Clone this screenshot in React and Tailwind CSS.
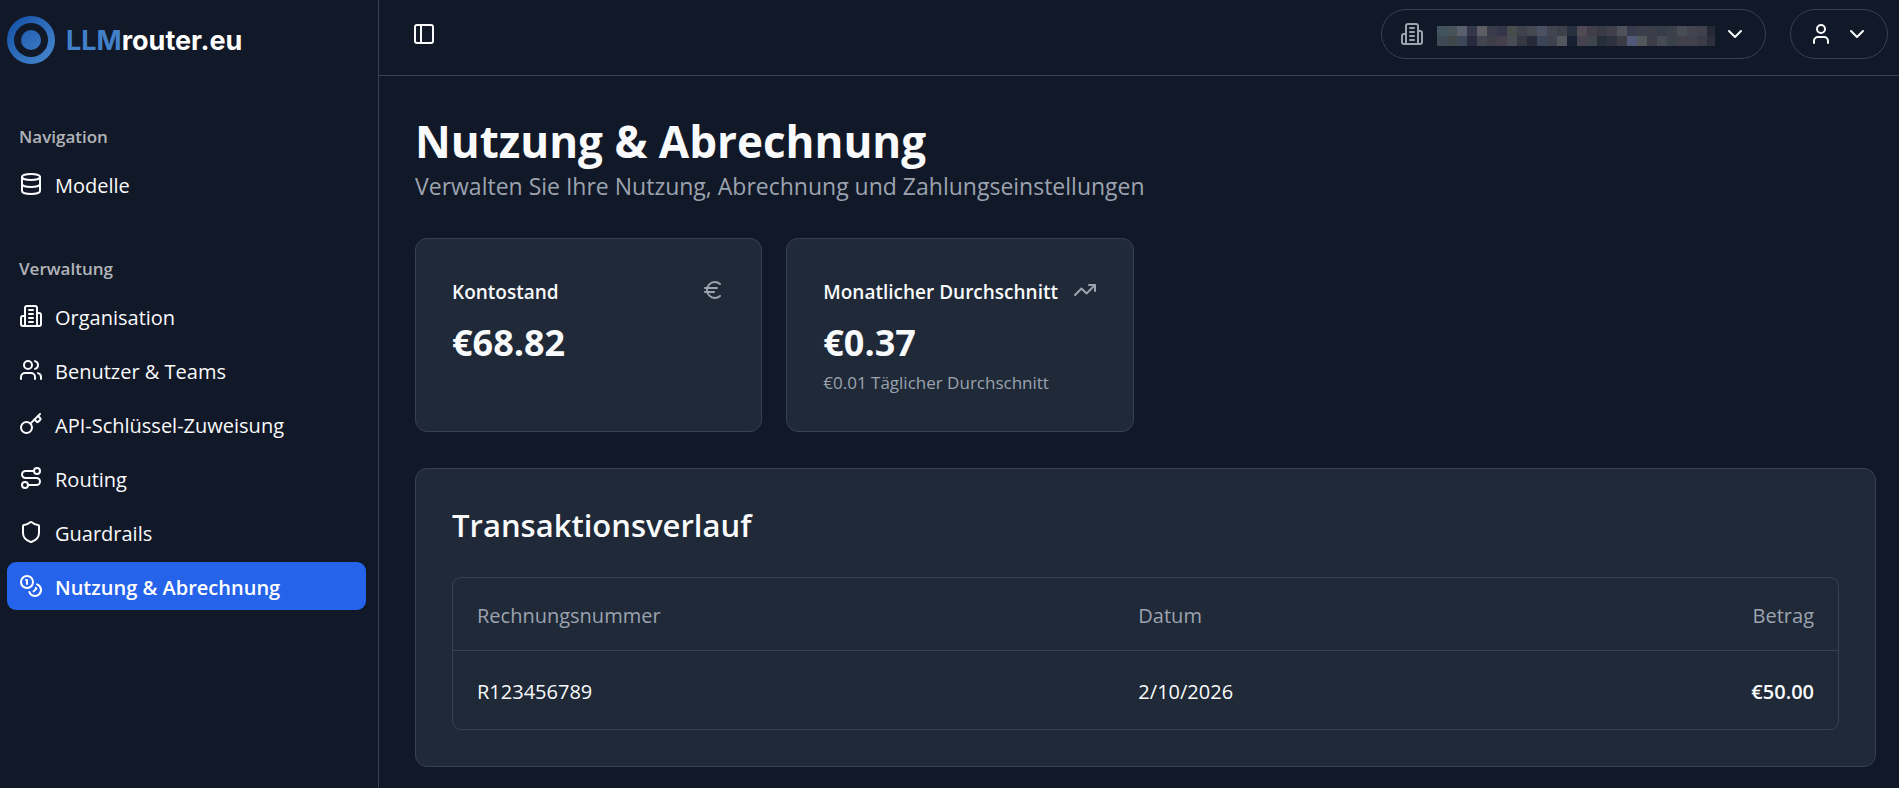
import {
  ChevronDown,
  Coins,
  Database,
  Euro,
  Key,
  PanelLeft,
  Route,
  Shield,
  TrendingUp,
  User,
  Users,
} from "lucide-react";

const navGroups = [
  {
    title: "Navigation",
    items: [{ label: "Modelle", icon: Database }],
  },
  {
    title: "Verwaltung",
    items: [
      { label: "Organisation", icon: OfficeIcon },
      { label: "Benutzer & Teams", icon: Users },
      { label: "API-Schlüssel-Zuweisung", icon: Key },
      { label: "Routing", icon: Route },
      { label: "Guardrails", icon: Shield },
      { label: "Nutzung & Abrechnung", icon: Coins, active: true },
    ],
  },
];

const stats = [
  { title: "Kontostand", value: "€68.82", icon: Euro },
  {
    title: "Monatlicher Durchschnitt",
    value: "€0.37",
    note: "€0.01 Täglicher Durchschnitt",
    icon: TrendingUp,
  },
];

const transactions = [{ id: "R123456789", date: "2/10/2026", amount: "€50.00" }];

// colours of the pixelated organisation name
const maskRows = [
  [
    "#42525f", "#465359", "#5a5f6e", "#34374a", "#5f5d64", "#3a3b4b", "#333548", "#474c4d", "#3f424b", "#444852",
    "#4b5162", "#414550", "#3c404a", "#263140", "#4f4a54", "#3f3e49", "#383b45", "#3f404b", "#4e5159", "#363b4d",
    "#3b3f4b", "#3b3d48", "#353d48", "#3b404a", "#474d54", "#434450", "#40414d", "#252935",
  ],
  [
    "#3d4a56", "#3f474a", "#3d475a", "#272a3e", "#42444f", "#3d3e4a", "#453f4d", "#474c55", "#353842", "#272a38",
    "#3b455a", "#3e424e", "#52565d", "#172033", "#47424f", "#3f454d", "#272d39", "#2d323e", "#3b3a46", "#505a78",
    "#50585c", "#3d3d49", "#464a52", "#394149", "#40414c", "#40414c", "#3b3c48", "#2d303c",
  ],
];

function OfficeIcon({ className }) {
  return (
    <svg
      viewBox="0 0 24 24"
      fill="none"
      stroke="currentColor"
      strokeWidth="2"
      strokeLinecap="round"
      strokeLinejoin="round"
      className={className}
      aria-hidden="true"
    >
      <path d="M6 22V4a2 2 0 0 1 2-2h8a2 2 0 0 1 2 2v18Z" />
      <path d="M6 12H4a2 2 0 0 0-2 2v6a2 2 0 0 0 2 2h2" />
      <path d="M18 9h2a2 2 0 0 1 2 2v9a2 2 0 0 1-2 2h-2" />
      <path d="M10 6h4M10 10h4M10 14h4M10 18h4" />
    </svg>
  );
}

function Logo() {
  return (
    <a href="#" className="flex items-center gap-[11px]">
      <svg viewBox="0 0 48 48" className="h-12 w-12" aria-hidden="true">
        <defs>
          <linearGradient id="logo" x1="0" y1="0" x2="48" y2="48" gradientUnits="userSpaceOnUse">
            <stop offset="0" stopColor="#124ea6" />
            <stop offset="1" stopColor="#4a8ad0" />
          </linearGradient>
        </defs>
        <circle cx="24" cy="24" r="20.5" fill="none" stroke="url(#logo)" strokeWidth="7" />
        <circle cx="24" cy="24" r="10" fill="url(#logo)" />
      </svg>
      <span className="pt-[2px] font-[Inter] text-[27px] leading-9 font-bold text-white">
        <span className="text-[#4281c9]">LLM</span>router.eu
      </span>
    </a>
  );
}

function Sidebar() {
  return (
    <aside className="w-[379px] shrink-0 border-r border-[#374151] pt-4 pr-3 pl-[7px]">
      <Logo />
      <nav className="mt-12 flex flex-col gap-9">
        {navGroups.map((group) => (
          <div key={group.title}>
            <h2 className="flex h-12 items-center px-3 pt-[2px] text-[17px] font-semibold text-gray-50/70">
              {group.title}
            </h2>
            <ul className="flex flex-col gap-[6px]">
              {group.items.map(({ label, icon: Icon, active }) => (
                <li key={label}>
                  <a
                    href="#"
                    className={`flex h-12 items-center gap-3 rounded-[9px] px-3 text-xl ${
                      active ? "bg-[#2563eb] font-semibold text-white" : "text-gray-50"
                    }`}
                  >
                    <Icon className="h-6 w-6 shrink-0" />
                    <span className="pt-[3px]">{label}</span>
                  </a>
                </li>
              ))}
            </ul>
          </div>
        ))}
      </nav>
    </aside>
  );
}

function Header() {
  return (
    <header className="flex h-[76px] items-center justify-between border-b border-[#374151] pr-[11px] pb-2 pl-[33px]">
      <button type="button" aria-label="Seitenleiste umschalten" className="flex h-6 w-6 items-center justify-center">
        <PanelLeft className="h-6 w-6" />
      </button>
      <div className="flex items-center gap-6">
        <button
          type="button"
          aria-label="Organisation wählen"
          className="flex h-[50px] items-center rounded-full border border-[#374151] px-[18px]"
        >
          <OfficeIcon className="mr-[13px] h-6 w-6 text-[#9ca3af]" />
          <span className="mr-2 flex w-[278px] flex-col overflow-hidden pt-1">
            {maskRows.map((row, index) => (
              <span key={index} className="flex">
                {row.map((color, cell) => (
                  <span key={cell} className="h-[10px] w-[10px] shrink-0" style={{ backgroundColor: color }} />
                ))}
              </span>
            ))}
          </span>
          <ChevronDown className="h-6 w-6" />
        </button>
        <button
          type="button"
          aria-label="Benutzermenü"
          className="flex h-[50px] items-center gap-3 rounded-full border border-[#374151] px-[18px]"
        >
          <User className="h-6 w-6" />
          <ChevronDown className="h-6 w-6" />
        </button>
      </div>
    </header>
  );
}

function StatCard({ title, value, note, icon: Icon }) {
  return (
    <article className="min-h-[194px] rounded-xl border border-[#374151] bg-[#1f2937] p-9">
      <div className="flex items-start justify-between pb-[11px]">
        <h2 className="pt-px text-[19px] leading-8 font-semibold whitespace-nowrap">{title}</h2>
        <Icon className="mt-[3px] h-6 w-6 shrink-0 text-[#9ca3af]" />
      </div>
      <p className="text-4xl leading-12 font-bold">{value}</p>
      {note && <p className="mt-1 text-[17px] leading-6 text-[#9ca3af]">{note}</p>}
    </article>
  );
}

function TransactionTable() {
  return (
    <section className="mt-9 rounded-xl border border-[#374151] bg-[#1f2937] p-9">
      <h2 className="text-[31px] leading-10 font-semibold">Transaktionsverlauf</h2>
      <div className="mt-8 rounded-[9px] border border-[#374151]">
        <table className="w-full text-xl">
          <thead>
            <tr className="h-[72px] border-b border-[#374151] text-[#9ca3af]">
              <th className="px-6 pt-1 text-left font-medium">Rechnungsnummer</th>
              <th className="px-6 pt-1 text-left font-medium">Datum</th>
              <th className="px-6 pt-1 text-right font-medium">Betrag</th>
            </tr>
          </thead>
          <tbody>
            {transactions.map((row) => (
              <tr key={row.id} className="h-[79px]">
                <td className="px-6 pt-1">{row.id}</td>
                <td className="px-6 pt-1">{row.date}</td>
                <td className="px-6 pt-1 text-right font-semibold">{row.amount}</td>
              </tr>
            ))}
          </tbody>
        </table>
      </div>
    </section>
  );
}

export default function App() {
  return (
    <div className="flex min-h-screen bg-[#111827] font-['Open_Sans','Noto_Sans',sans-serif] text-gray-50">
      <Sidebar />
      <div className="min-w-0 flex-1">
        <Header />
        <main className="pt-9 pr-[23px] pb-5 pl-9">
          <h1 className="text-[44px] leading-[58px] font-bold">Nutzung & Abrechnung</h1>
          <p className="text-[23px] leading-8 text-[#9ca3af]">
            Verwalten Sie Ihre Nutzung, Abrechnung und Zahlungseinstellungen
          </p>
          <div className="mt-9 grid grid-cols-4 gap-6">
            {stats.map((stat) => (
              <StatCard key={stat.title} {...stat} />
            ))}
          </div>
          <TransactionTable />
        </main>
      </div>
    </div>
  );
}
